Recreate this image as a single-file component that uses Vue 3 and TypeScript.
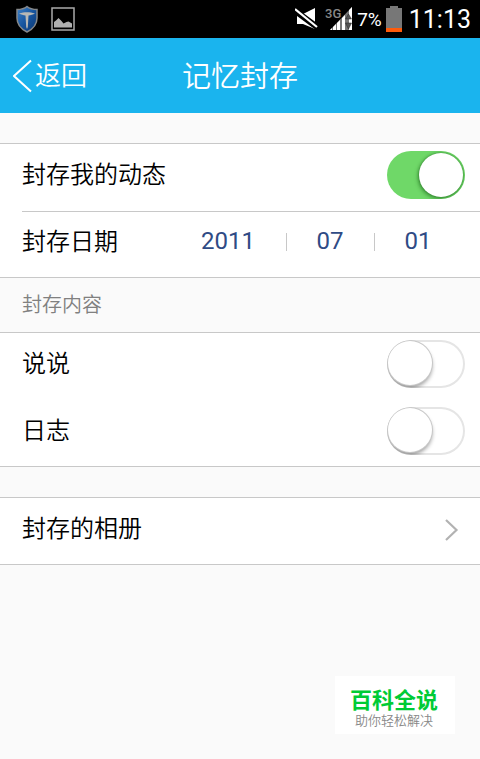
<script setup lang="ts">
import { ref } from 'vue'

interface ContentSwitch {
  id: string
  label: string
  enabled: boolean
}

const sealed = ref(true)
const contents = ref<ContentSwitch[]>([
  { id: 'talk', label: '说说', enabled: false },
  { id: 'journal', label: '日志', enabled: false },
])

const year = ref('2011')
const month = ref('07')
const day = ref('01')

const twoDigits = (n: number): string => String(n).padStart(2, '0')
const years = Array.from({ length: 10 }, (_, i) => String(2005 + i))
const months = Array.from({ length: 12 }, (_, i) => twoDigits(i + 1))
const days = Array.from({ length: 31 }, (_, i) => twoDigits(i + 1))
</script>

<template>
  <div class="screen">
    <div class="status">
      <svg class="shield" width="24" height="28" viewBox="0 0 24 28" aria-hidden="true">
        <defs>
          <linearGradient id="shieldFill" x1="0" y1="0" x2="1" y2="1">
            <stop offset="0" stop-color="#3f82c8" />
            <stop offset="0.5" stop-color="#17559f" />
            <stop offset="1" stop-color="#0b3570" />
          </linearGradient>
        </defs>
        <path d="M12 1.500C9 4 5.500 4.500 2 4.500V13c0 6.500 4 11 10 14 6-3 10-7.500 10-14V4.500C18.500 4.500 15 4 12 1.500Z" fill="url(#shieldFill)" stroke="#85888b" stroke-width="1.500" />
        <path d="M4 8.500c3-1 5-1.300 8-1.300s5 .3 8 1.300c-2 1.300-4.500 1.700-6.500 1.900L12.800 22 12 24l-.8-2-.7-11.600C8.500 10.200 6 9.800 4 8.500Z" fill="#b8b8b5" />
      </svg>
      <svg width="24" height="24" viewBox="0 0 24 24" aria-hidden="true">
        <rect x="1" y="1" width="22" height="22" fill="none" stroke="#aaa" stroke-width="1.500" />
        <path d="M3 20.500V15l2-1.500 2.500-2.500 3 3 2 2.500 3-1.500 2-.500 3.500 2v4Z" fill="#b0b0b0" />
      </svg>
      <div class="status-right">
        <svg width="24" height="24" viewBox="0 0 24 24" aria-hidden="true">
          <path d="M2 7h6l12-6v21L8 17H2Z" fill="#fff" />
          <path d="M-1 3 22 20" stroke="#000" stroke-width="6" />
          <path d="M0 2 22 20" stroke="#fff" stroke-width="2.200" />
        </svg>
        <svg class="signal" width="28" height="26" viewBox="0 0 28 26" aria-label="3G">
          <path d="M27 1v23H5Z" fill="#777" />
          <path d="M7 22v2H5Zm4-4v6H8v-3Zm4-4v10h-3v-7Zm5-5v15h-3V12Zm7-8v23h-3V4Z" fill="#fff" />
          <path d="m23.500 8 3 5h-6Zm0 15-3-6h6Z" fill="#555" stroke="#222" stroke-width=".5" />
          <text x="0" y="12" class="network">3G</text>
        </svg>
        <span class="percent">7%</span>
        <svg class="battery" width="18" height="26" viewBox="0 0 18 26" aria-hidden="true">
          <path d="M5 0h8v2h4v20H1V2h4Z" fill="#777" />
          <path d="M1 22h16v4H1Z" fill="#ff5b0a" />
        </svg>
        <span class="clock">11:13</span>
      </div>
    </div>

    <header class="navbar">
      <button class="back" type="button">
        <svg width="22" height="34" viewBox="0 0 22 34" aria-hidden="true">
          <path d="M18 1.500 1 17l17 15.500" fill="none" stroke="#fff" stroke-width="2" />
        </svg>
        <span>返回</span>
      </button>
      <h1>记忆封存</h1>
    </header>

    <main>
      <section class="group">
        <label class="row row-divided">
          <span>封存我的动态</span>
          <input v-model="sealed" class="switch" type="checkbox" role="switch" />
        </label>
        <div class="row row-date">
          <span>封存日期</span>
          <div class="date">
            <select v-model="year" class="year" aria-label="年">
              <option v-for="y in years" :key="y">{{ y }}</option>
            </select>
            <select v-model="month" aria-label="月">
              <option v-for="m in months" :key="m">{{ m }}</option>
            </select>
            <select v-model="day" aria-label="日">
              <option v-for="d in days" :key="d">{{ d }}</option>
            </select>
          </div>
        </div>
      </section>

      <h2>封存内容</h2>
      <section class="group">
        <label v-for="item in contents" :key="item.id" class="row">
          <span>{{ item.label }}</span>
          <input v-model="item.enabled" class="switch" type="checkbox" role="switch" />
        </label>
      </section>

      <section class="group album">
        <a class="row" href="#album">
          <span>封存的相册</span>
          <svg class="chevron" width="16" height="24" viewBox="0 0 16 24" aria-hidden="true">
            <path d="M2 3l10.500 10L2 23" fill="none" stroke="#b2b2b2" stroke-width="2.200" />
          </svg>
        </a>
      </section>
    </main>

    <aside class="badge">
      <strong>百科全说</strong>
      <span>助你轻松解决</span>
    </aside>
  </div>
</template>

<style>
body {
  background: #fafafa;
}
</style>

<style scoped>
.screen {
  position: relative;
  display: flex;
  flex-direction: column;
  min-height: 100vh;
  background: #fafafa;
  color: #000;
  font-family: Roboto, "Noto Sans CJK SC", sans-serif;
  font-weight: 350;
}

.status {
  display: flex;
  align-items: center;
  gap: 12px;
  height: 38px;
  padding: 0 9px 0 15px;
  background: #000;
  color: #fff;
  font-weight: 400;
}

.status-right {
  display: flex;
  align-items: center;
  margin-left: auto;
}

.signal {
  margin: 0 4px 0 6px;
}

.network {
  fill: #888;
  stroke: #000;
  stroke-width: 2px;
  paint-order: stroke;
  font-size: 13px;
  font-weight: 500;
}

.percent {
  font-size: 19px;
}

.battery {
  margin: 0 6px 0 3px;
}

.clock {
  font-size: 25px;
}

.navbar {
  display: grid;
  grid-template-columns: 1fr auto 1fr;
  align-items: center;
  height: 75px;
  background: #1ab4ee;
  color: #fff;
}

.back {
  display: flex;
  align-items: center;
  justify-self: start;
  padding: 0 0 0 13px;
  border: 0;
  background: none;
  color: inherit;
  font: inherit;
  font-size: 26px;
  line-height: 36px;
}

h1 {
  margin: 0;
  padding-top: 2px;
  font-size: 29px;
  font-weight: 350;
  line-height: 40px;
}

main {
  padding-top: 30px;
}

.group {
  border-top: 1px solid #c8c8c8;
  border-bottom: 1px solid #c8c8c8;
  background: #fff;
}

.row {
  display: flex;
  align-items: center;
  justify-content: space-between;
  box-sizing: border-box;
  height: 67px;
  margin-left: 22px;
  padding: 0 15px 5px 0;
  color: inherit;
  font-size: 24px;
  line-height: 34px;
  text-decoration: none;
}

.row:last-child {
  height: 66px;
}

.row-divided {
  height: 68px;
  border-bottom: 1px solid #c8c8c8;
}

.row.row-date {
  height: 65px;
  padding-right: 18px;
}

.date {
  display: flex;
}

select {
  width: 88px;
  height: 32px;
  margin: 0;
  padding: 0 0 2px;
  border: 0;
  border-radius: 0;
  appearance: none;
  background: linear-gradient(#c8c8c8, #c8c8c8) left center / 1px 18px no-repeat;
  color: #2f4b85;
  font: inherit;
  font-weight: 400;
  line-height: 30px;
  text-align: center;
  text-align-last: center;
}

.year {
  width: 116px;
  background: none;
}

h2 {
  margin: 0;
  padding: 0 22px;
  color: #808080;
  font-size: 20px;
  font-weight: 350;
  line-height: 54px;
}

.switch {
  display: flex;
  align-items: flex-start;
  flex-shrink: 0;
  box-sizing: border-box;
  width: 78px;
  height: 48px;
  margin: 0;
  padding: 1px;
  border-radius: 24px;
  appearance: none;
  overflow: hidden;
  background: #fff;
  box-shadow: inset 0 0 0 2px #e5e5e5;
}

.switch::before {
  content: "";
  width: 44px;
  height: 44px;
  border-radius: 50%;
  background: #fff;
  box-shadow: 0 0 0 1px #c8c8c8, 0 3px 4px rgba(0, 0, 0, 0.4);
}

.switch:checked {
  justify-content: flex-end;
  padding: 2px;
  background: #6fd868;
  box-shadow: none;
}

.switch:checked::before {
  box-shadow: 0 0 3px rgba(0, 70, 0, 0.5), -1px 2px 4px rgba(0, 70, 0, 0.4);
}

.album {
  margin-top: 30px;
}

.chevron {
  margin-right: 5px;
}

.badge {
  position: absolute;
  right: 25px;
  bottom: 25px;
  display: flex;
  flex-direction: column;
  align-items: center;
  box-sizing: border-box;
  width: 120px;
  height: 58px;
  padding: 13px 2px 0 0;
  background: #fff;
}

.badge strong {
  color: #00cb35;
  font-size: 22px;
  font-weight: 700;
  line-height: 24px;
}

.badge span {
  color: #888;
  font-size: 13px;
  font-weight: 350;
  line-height: 16px;
}
</style>
